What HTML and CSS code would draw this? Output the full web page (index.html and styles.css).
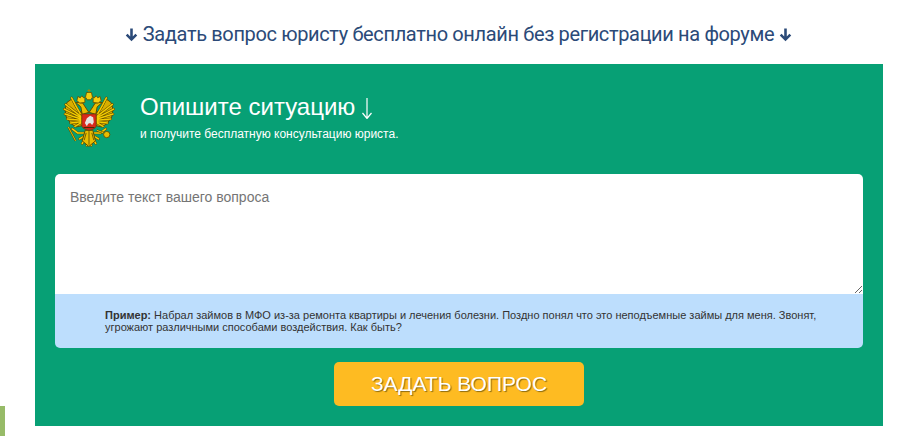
FILE: index.html
```html
<!DOCTYPE html>
<html lang="ru">

<head>
    <meta charset="UTF-8">
    <meta name="viewport" content="width=device-width, initial-scale=1.0">
    <title>Задать вопрос юристу</title>
    <link rel="stylesheet" href="styles.css">
</head>

<body>
    <h3 class="top-title">
        <svg class="arrow-icon" viewBox="0 0 12 14"><path d="M6 1.5v10M1.5 7.2L6 11.7l4.5-4.5" /></svg>
        Задать вопрос юристу бесплатно онлайн без регистрации на форуме
        <svg class="arrow-icon" viewBox="0 0 12 14"><path d="M6 1.5v10M1.5 7.2L6 11.7l4.5-4.5" /></svg>
    </h3>

    <form class="panel">
        <div class="panel-head">
            <!-- emblem, coords taken from the zoomed crop -->
            <svg class="emblem" viewBox="68 58 157 174">
                <defs>
                    <path id="feathers" fill="none" stroke-linecap="round" d="M122 140L76 104M122 144L72 118M122 148L74 133M122 152L81 148M122 156L91 160M122 160L104 170M120 132C112 118 104 104 94 84M132 200L118 208M136 206L126 222M142 208L140 228M130 190L112 190L96 178" />
                    <g id="half">
                        <path d="M126 130L108 116 94 88 80 98 74 118 78 142 92 162 108 172 126 168Z" fill="#d9ae00" stroke="#5f4c00" stroke-width="3" />
                        <use href="#feathers" stroke="#5f4c00" stroke-width="7.5" />
                        <use href="#feathers" stroke="#f5cc00" stroke-width="4.5" />
                        <path d="M146 128L134 110 128 100 116 98 106 98 116 106 122 112 126 134Z" fill="#e8bd00" stroke="#5f4c00" stroke-width="3" />
                        <path d="M110 92L113 80 120 84 125 78 130 84 134 82 134 98 118 100Z" fill="#f5cf10" stroke="#5f4c00" stroke-width="2.5" />
                    </g>
                </defs>
                <use href="#half" />
                <use href="#half" transform="matrix(-1 0 0 1 293 0)" />
                <path d="M136 82L139 68H154L157 82 152 90H141Z" fill="#f5cf10" stroke="#5f4c00" stroke-width="2.5" />
                <path d="M146.500 58V68M142 62H151" stroke="#a88600" stroke-width="3" />
                <path d="M84 172L106 214" fill="none" stroke="#5f4c00" stroke-width="6" />
                <path d="M84 172L106 214" fill="none" stroke="#e8bd00" stroke-width="3" />
                <path d="M135 182H158L166 214 146 231 126 214Z" fill="#e8bd00" stroke="#5f4c00" stroke-width="3" />
                <path d="M146.500 184V226M138 190L132 212M155 190L161 212" stroke="#5f4c00" stroke-width="2.5" />
                <path d="M170 182L190 190" stroke="#5f4c00" stroke-width="6" />
                <path d="M170 182L190 190" stroke="#e8bd00" stroke-width="3" />
                <circle cx="200" cy="195" r="9.500" fill="#e8bd00" stroke="#5f4c00" stroke-width="2.500" />
                <path d="M125 133H168V168C168 176 158 180 146.500 182 135 180 125 176 125 168Z" fill="#d9291c" stroke="#6a3a00" stroke-width="2" />
                <path d="M134 160L140 146 150 138 159 143 161 158 156 166 150 160 144 162 140 170Z" fill="#e4e4e4" />
                <path d="M130 174H163" stroke="#3c2a00" stroke-width="3" />
            </svg>
            <div class="panel-text">
                <div class="panel-title">Опишите ситуацию
                    <svg class="title-arrow" viewBox="0 0 10 21"><path d="M5 0v20.500M.5 15L5 20.500 9.500 15" /></svg>
                </div>
                <div class="panel-sub">и получите бесплатную консультацию юриста.</div>
            </div>
        </div>

        <div class="question-box">
            <textarea class="question-input" placeholder="Введите текст вашего вопроса"></textarea>
            <div class="hint"><b>Пример:</b> Набрал займов в МФО из-за ремонта квартиры и лечения болезни. Поздно понял что это неподъемные займы для меня. Звонят, угрожают различными способами воздействия. Как быть?</div>
        </div>

        <div class="submit-row">
            <button class="button" type="button">ЗАДАТЬ ВОПРОС</button>
        </div>
    </form>

    <div class="side-tab"></div>
</body>

</html>
```

FILE: styles.css
```css
/* General Styles */
html,
body {
    height: 100%;
}

body {
    font-family: 'Liberation Sans', Arial, sans-serif;
    background: #fff;
    margin: 0;
    overflow: hidden;
    position: relative;
}

.top-title {
    font-family: Roboto, sans-serif;
    font-size: 20px;
    font-weight: 400;
    letter-spacing: -0.36px;
    line-height: 24px;
    color: #2b4a78;
    text-align: center;
    margin: 0;
    padding: 22px 0 18px;
}

.arrow-icon {
    width: 13px;
    height: 15px;
    vertical-align: -1px;
    fill: none;
    stroke: #2b4a78;
    stroke-width: 2.4;
}

.panel {
    display: block;
    background: #07a075;
    margin: 0 34px 0 35px;
    padding: 25px 20px 20px;
}

.panel-head {
    display: flex;
    align-items: center;
    gap: 25px;
    padding-left: 8px;
    height: 58px;
    margin-bottom: 27px;
}

.emblem {
    width: 52px;
    height: 58px;
    flex: none;
}

.panel-text {
    margin-top: -4px;
}

.panel-title {
    color: #fff;
    font-size: 24px;
    line-height: 30px;
}

.title-arrow {
    width: 10px;
    height: 21px;
    vertical-align: -4px;
    fill: none;
    stroke: #fff;
    stroke-width: 1.2;
}

.panel-sub {
    color: #fff;
    font-size: 12px;
    line-height: 14px;
    margin-top: 5px;
}

.question-box {
    border-radius: 5px;
    overflow: hidden;
}

.question-input {
    display: block;
    box-sizing: border-box;
    width: 100%;
    height: 120px;
    border: none;
    outline: none;
    padding: 15px;
    font-family: 'Liberation Sans', Arial, sans-serif;
    font-size: 14px;
    line-height: 17px;
    color: #333;
}

.question-input::placeholder {
    color: #757575;
}

.hint {
    background: #bddefd;
    color: #333;
    font-size: 11px;
    line-height: 12px;
    height: 54px;
    box-sizing: border-box;
    padding: 15px 40px 0 50px;
}

.submit-row {
    display: flex;
    justify-content: center;
    margin-top: 14px;
}

.button {
    width: 250px;
    height: 44px;
    background: #febb22;
    color: #fff;
    border: none;
    border-radius: 5px;
    font-family: 'Liberation Sans', Arial, sans-serif;
    font-size: 21px;
    text-shadow: 1px 1px 1px #8a6a10;
    cursor: pointer;
}

/* piece of a sticky widget at the page corner */
.side-tab {
    position: absolute;
    left: 0;
    top: 406px;
    width: 5px;
    height: 30px;
    background: #97bb68;
}
```
